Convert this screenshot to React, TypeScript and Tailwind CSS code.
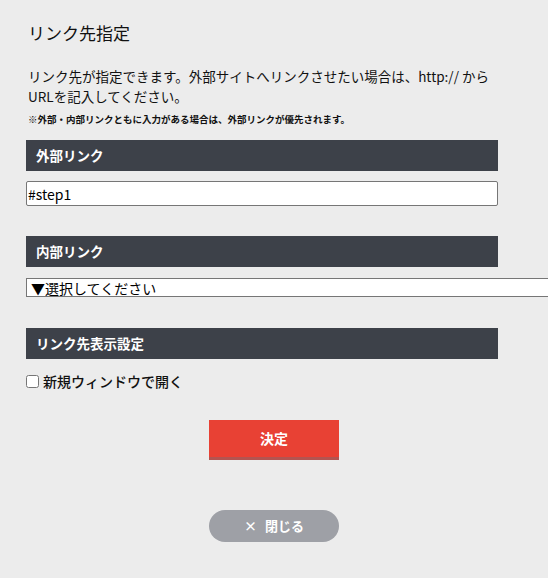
import React from "react";

const font = { fontFamily: '"Noto Sans CJK JP", "Noto Sans", sans-serif' };

function Bar({ children }: { children: React.ReactNode }) {
  return (
    <div className="h-[31px] w-[472px] bg-[#3d4149] pl-[10px] flex items-center text-white text-[13.5px] font-bold leading-none">
      {children}
    </div>
  );
}

export default function App() {
  return (
    <div
      className="w-[548px] h-[578px] bg-[#ececec] overflow-hidden text-[#111] pt-[21px]"
      style={font}
    >
      <div className="pl-[26px]">
        <h1 className="text-[17px] leading-[24px] pl-[2px] font-normal">リンク先指定</h1>
        <p className="mt-[21px] text-[13.5px] leading-[20px] w-[510px] pl-[2px] whitespace-nowrap">
          リンク先が指定できます。外部サイトへリンクさせたい場合は、http:// から
          <br />
          URLを記入してください。
        </p>
        <p className="mt-[6px] text-[9.5px] leading-[14px] font-bold pl-[2px]">
          ※外部・内部リンクともに入力がある場合は、外部リンクが優先されます。
        </p>
        <div className="mt-[14px]">
          <Bar>外部リンク</Bar>
        </div>
        <input
          type="text"
          defaultValue="#step1"
          className="mt-[10px] block h-[25px] w-[472px] bg-white border border-[#767676] rounded-[2px] px-[1px] text-[14px] text-black outline-none"
          style={font}
        />
        <div className="mt-[30px]">
          <Bar>内部リンク</Bar>
        </div>
        <div className="mt-[11px] h-[19px] w-[560px] bg-white border border-[#767676] flex items-center pl-[4px] text-[14px] leading-none text-black">
          ▼選択してください
        </div>
        <div className="mt-[31px]">
          <Bar>リンク先表示設定</Bar>
        </div>
        <label className="mt-[12px] h-[20px] flex items-center gap-[4px] text-[14px] leading-none">
          <input type="checkbox" className="m-0 w-[13px] h-[13px]" />
          <span className="font-medium">新規ウィンドウで開く</span>
        </label>
      </div>
      <div className="w-full flex flex-col items-center">
        <button
          className="mt-[29px] w-[130px] h-[40px] bg-[#e84134] border-b-[3px] border-[#b35450] text-white text-[14px] font-bold flex items-center justify-center"
          style={font}
        >
          決定
        </button>
        <button
          className="mt-[50px] w-[130px] h-[32px] rounded-full bg-[#9ea0a6] text-white text-[13px] font-bold flex items-center justify-center gap-[8px]"
          style={font}
        >
          <span>×</span>
          <span>閉じる</span>
        </button>
      </div>
    </div>
  );
}
